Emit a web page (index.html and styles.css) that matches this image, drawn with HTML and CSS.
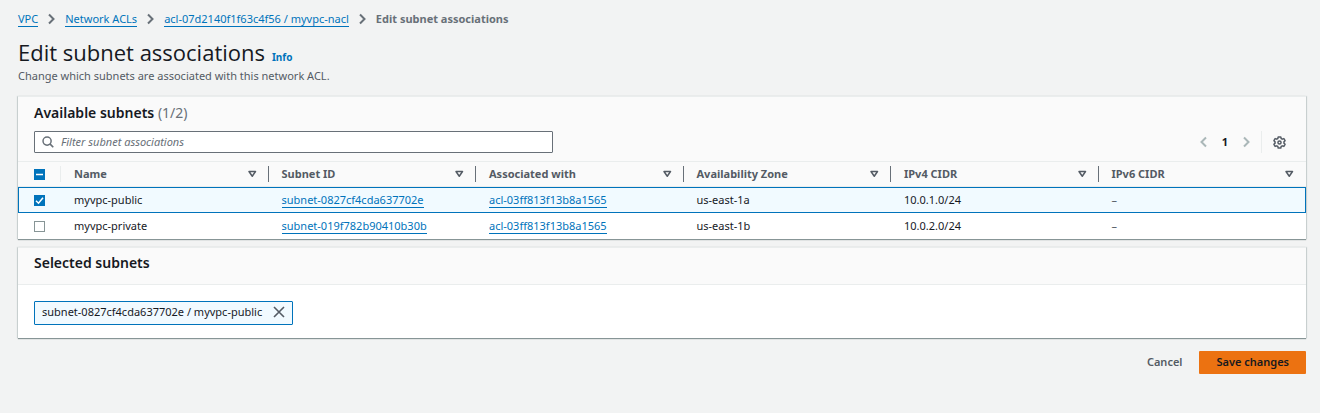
FILE: index.html
```html
<!DOCTYPE html>
<html lang="en">
<head>
<meta charset="utf-8">
<meta name="viewport" content="width=device-width, initial-scale=1">
<title>Edit subnet associations</title>
<link rel="stylesheet" href="styles.css">
</head>
<body>
<svg width="0" height="0" class="sprite" aria-hidden="true">
  <symbol id="chevron" viewBox="0 0 10 14"><path d="M2 2.500L6.500 7 2 11.500" fill="none" stroke="currentColor" stroke-width="2"/></symbol>
  <symbol id="sort" viewBox="0 0 10 8"><path d="M2 1.500h6.500L5.250 6.200z" fill="none" stroke="currentColor" stroke-width="1.500" stroke-linejoin="round"/></symbol>
</svg>
<main class="page">
  <nav aria-label="Breadcrumb">
    <ol class="crumbs">
      <li><a class="link" href="#vpc">VPC</a><svg class="chevron"><use href="#chevron"/></svg></li>
      <li><a class="link" href="#acls">Network ACLs</a><svg class="chevron"><use href="#chevron"/></svg></li>
      <li><a class="link" href="#acl">acl-07d2140f1f63c4f56 / myvpc-nacl</a><svg class="chevron"><use href="#chevron"/></svg></li>
      <li class="current" aria-current="page">Edit subnet associations</li>
    </ol>
  </nav>

  <header class="title">
    <div class="title-row">
      <h1>Edit subnet associations</h1>
      <a class="info" href="#info">Info</a>
    </div>
    <p>Change which subnets are associated with this network ACL.</p>
  </header>

  <section class="card">
    <div class="card-head">
      <h2>Available subnets <span class="count">(1/2)</span></h2>
      <div class="tools">
        <label class="search">
          <svg viewBox="0 0 13 13" class="search-icon"><circle cx="5.5" cy="5.5" r="4.4" fill="none" stroke="currentColor" stroke-width="1.6"/><path d="M8.6 8.6l3.6 3.6" stroke="currentColor" stroke-width="1.8"/></svg>
          <input type="text" placeholder="Filter subnet associations" aria-label="Filter subnet associations">
        </label>
        <div class="pager">
          <button type="button" class="icon-button faded" aria-label="Previous page" disabled><svg class="chevron flip"><use href="#chevron"/></svg></button>
          <button type="button" class="page-number">1</button>
          <button type="button" class="icon-button faded" aria-label="Next page" disabled><svg class="chevron"><use href="#chevron"/></svg></button>
          <span class="divider"></span>
          <button type="button" class="icon-button" aria-label="Preferences"><svg class="gear" viewBox="0 0 14 14" fill="none" stroke="currentColor" stroke-width="1.6" stroke-linejoin="round"><path d="M5.6 1h2.8l.4 1.7 1.2.7 1.700-.6 1.300 2.300-1.200 1.200v1.400l1.200 1.200-1.300 2.300-1.700-.6-1.200.7-.4 1.700H5.600l-.4-1.700-1.200-.7-1.700.6L1 8.900l1.200-1.200V6.300L1 5.100l1.300-2.300 1.700.6 1.200-.7z"/><circle cx="7" cy="7" r="1.700"/></svg></button>
        </div>
      </div>
    </div>
    <table>
      <colgroup><col class="pick-col"><col><col><col><col><col><col></colgroup>
      <thead>
        <tr>
          <th scope="col"><div class="pick-head"><label class="check"><input type="checkbox" class="mixed" aria-label="Select all subnets" aria-checked="mixed"><svg viewBox="0 0 11 11"><path d="M2 5.500h7"/></svg></label><span class="rule light"></span></div></th>
          <th scope="col"><div class="head">Name<button type="button" aria-label="Sort by name"><svg><use href="#sort"/></svg></button><span class="rule"></span></div></th>
          <th scope="col"><div class="head">Subnet ID<button type="button" aria-label="Sort by subnet ID"><svg><use href="#sort"/></svg></button><span class="rule"></span></div></th>
          <th scope="col"><div class="head">Associated with<button type="button" aria-label="Sort by association"><svg><use href="#sort"/></svg></button><span class="rule"></span></div></th>
          <th scope="col"><div class="head">Availability Zone<button type="button" aria-label="Sort by zone"><svg><use href="#sort"/></svg></button><span class="rule"></span></div></th>
          <th scope="col"><div class="head">IPv4 CIDR<button type="button" aria-label="Sort by IPv4 CIDR"><svg><use href="#sort"/></svg></button><span class="rule"></span></div></th>
          <th scope="col"><div class="head">IPv6 CIDR<button type="button" aria-label="Sort by IPv6 CIDR"><svg><use href="#sort"/></svg></button><span class="rule none"></span></div></th>
        </tr>
      </thead>
      <tbody>
        <tr class="selected">
          <td><label class="check"><input type="checkbox" checked aria-label="Select myvpc-public"><svg viewBox="0 0 11 11"><path d="M2 5.700l2.500 2.500 4.500-5.500"/></svg></label></td>
          <td>myvpc-public</td>
          <td><a class="link" href="#s1">subnet-0827cf4cda637702e</a></td>
          <td><a class="link" href="#a1">acl-03ff813f13b8a1565</a></td>
          <td>us-east-1a</td>
          <td>10.0.1.0/24</td>
          <td>–</td>
        </tr>
        <tr>
          <td><label class="check"><input type="checkbox" aria-label="Select myvpc-private"></label></td>
          <td>myvpc-private</td>
          <td><a class="link" href="#s2">subnet-019f782b90410b30b</a></td>
          <td><a class="link" href="#a2">acl-03ff813f13b8a1565</a></td>
          <td>us-east-1b</td>
          <td>10.0.2.0/24</td>
          <td>–</td>
        </tr>
      </tbody>
    </table>
  </section>

  <section class="card">
    <div class="card-head compact"><h2>Selected subnets</h2></div>
    <div class="card-body">
      <span class="token">subnet-0827cf4cda637702e / myvpc-public
        <button type="button" aria-label="Remove subnet"><svg viewBox="0 0 12 12"><path d="M1 1l10 10M11 1L1 11" stroke="currentColor" stroke-width="1.600"/></svg></button>
      </span>
    </div>
  </section>

  <div class="actions">
    <button type="button" class="cancel">Cancel</button>
    <button type="submit" class="primary">Save changes</button>
  </div>
</main>
</body>
</html>
```
FILE: styles.css
```css
* { box-sizing: border-box; }

body {
  margin: 0;
  background: #f2f3f3;
  color: #16191f;
  font: 11px/16px "Noto Sans", "Open Sans", sans-serif;
}

h1, h2, p, ol { margin: 0; padding: 0; }

button {
  padding: 0;
  border: 0;
  background: none;
  color: #545b64;
  font: inherit;
}

svg { display: block; }
.sprite { position: absolute; }

.page { padding: 11px 14px 16px 18px; }

.link {
  color: #0073bb;
  text-decoration: none;
  border-bottom: 1px solid #0073bb;
}

.crumbs { display: flex; list-style: none; }
.crumbs li { display: flex; align-items: center; }
.crumbs .link { line-height: 15px; }
.chevron { width: 10px; height: 14px; }
.crumbs .chevron { margin: 0 8px 0 9px; color: #687078; }
.current { color: #687078; font-weight: 700; }

.title { padding: 9px 0 12px; }
.title-row { display: flex; align-items: baseline; gap: 7px; }
h1 { font-family: "Open Sans", "Noto Sans", sans-serif; font-size: 22px; line-height: 32px; font-weight: 400; }
.info { color: #0073bb; font-size: 10px; font-weight: 700; text-decoration: none; }
.title p { color: #545b64; }

.card {
  margin-bottom: 8px;
  background: #fff;
  border-top: 1px solid #eaeded;
  box-shadow: 0 1px 1px #879596, 1px 0 1px #d5dbdb, -1px 0 1px #d5dbdb;
}

.card-head { padding: 6px 16px 8px; background: #fafafa; border-bottom: 1px solid #eaeded; }
.card-head.compact { padding: 5px 16px 11px; }
h2 { font-size: 14px; line-height: 20px; font-weight: 600; }
.count { color: #687078; font-weight: 400; }

.tools { display: flex; justify-content: space-between; align-items: center; margin-top: 8px; }
.search {
  display: flex;
  align-items: center;
  gap: 7px;
  flex: 0 1 519px;
  height: 22px;
  padding: 0 7px;
  background: #fff;
  border: 1px solid #687078;
  border-radius: 1px;
  color: #687078;
}
.search-icon { width: 12px; height: 12px; }
.search input {
  flex: 1;
  min-width: 0;
  padding: 0;
  border: 0;
  outline: 0;
  background: none;
  color: #16191f;
  font: inherit;
}
.search input::placeholder { color: #687078; font-style: italic; }

.pager { display: flex; align-items: center; padding-right: 4px; }
.flip { transform: scaleX(-1); }
.faded { color: #aab7b8; }
.page-number { padding: 0 14px 1px; color: #16191f; font-weight: 700; }
.divider { width: 1px; height: 22px; margin: 0 11px 0 9px; background: #eaeded; }
.gear { width: 13px; height: 13px; }

table { width: 100%; table-layout: fixed; border-collapse: separate; border-spacing: 0; }
.pick-col { width: 43px; }
th { height: 25px; padding: 0; background: #fafafa; color: #545b64; font-weight: 700; text-align: left; border-bottom: 1px solid #eaeded; }
td { height: 26px; padding: 0 0 0 13px; }
td:first-child { padding-left: 16px; }
td:last-child { color: #545b64; }
.head, .pick-head { display: flex; align-items: center; padding-left: 13px; }
.pick-head { padding-left: 16px; justify-content: space-between; }
.head button { margin-left: auto; }
.head svg { width: 10px; height: 8px; }
.rule { width: 1px; height: 16px; margin-left: 11px; background: #687078; }
.rule.light { background: #eaeded; }
.rule.none { background: none; }
td .link { display: inline-block; line-height: 14px; }

.selected td { background: #f1faff; border: solid #0073bb; border-width: 1px 0; }
.selected td:first-child { border-left-width: 1px; padding-left: 15px; }
.selected td:last-child { border-right-width: 1px; }

.check { display: grid; width: 11px; height: 11px; }
.check input, .check svg { grid-area: 1 / 1; width: 11px; height: 11px; }
.check input { appearance: none; margin: 0; background: #fff; border: 1px solid #879596; }
.check input:checked, .check .mixed { background: #0073bb; border-color: #0073bb; }
.check svg { pointer-events: none; z-index: 1; fill: none; stroke: #fff; stroke-width: 1.5; }

.card-body { display: flex; padding: 16px 16px 13px; }
.token {
  display: flex;
  align-items: center;
  gap: 11px;
  height: 24px;
  padding: 0 7px 2px;
  background: #f1faff;
  border: 1px solid #0073bb;
  border-radius: 1px;
}
.token svg { width: 12px; height: 12px; }

.actions { display: flex; justify-content: flex-end; align-items: center; gap: 17px; padding-top: 5px; }
.cancel { padding-bottom: 2px; font-weight: 600; }
.primary { height: 23px; padding: 0 17px 2px; background: #ec7211; border-radius: 1px; color: #16191f; font-weight: 600; }
```
